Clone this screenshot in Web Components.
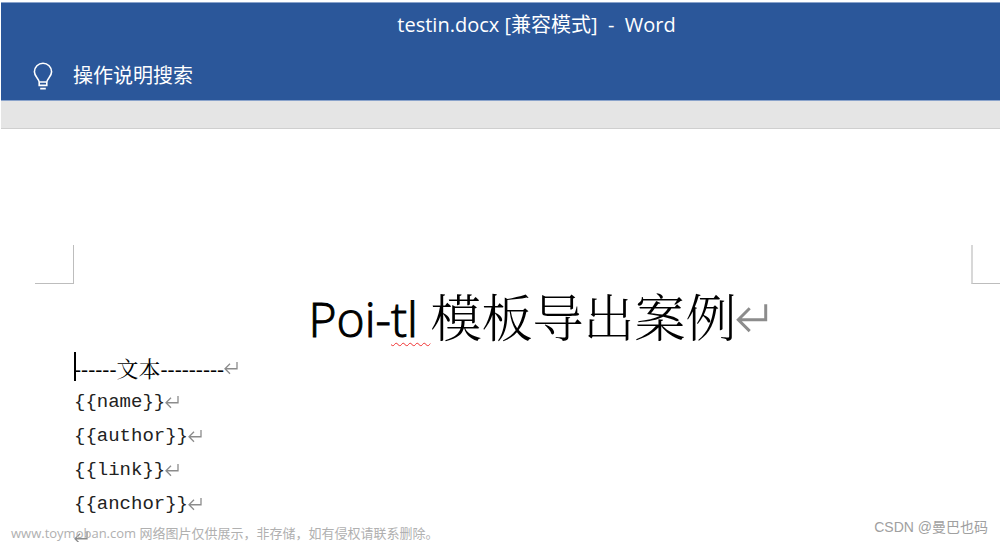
<!DOCTYPE html>
<html lang="zh-CN">
<head>
<meta charset="utf-8">
<title>testin.docx - Word</title>
<style>
body { margin: 0; background: #fff; font-family: "Open Sans", "Noto Sans CJK SC", sans-serif; }
</style>
</head>
<body>
<word-window>
  <word-titlebar slot="bar">testin.docx [兼容模式] &nbsp;- &nbsp;Word</word-titlebar>
  <word-tellme slot="bar">操作说明搜索</word-tellme>
  <word-page>
    <doc-title><latin-run>Poi-<spell-error>tl&nbsp;</spell-error></latin-run>模板导出案例</doc-title>
    <doc-line caret>------文本---------</doc-line>
    <doc-line mono>{{name}}</doc-line>
    <doc-line mono>{{author}}</doc-line>
    <doc-line mono>{{link}}</doc-line>
    <doc-line mono>{{anchor}}</doc-line>
    <doc-line mono></doc-line>
  </word-page>
  <water-mark slot="overlay">www.toymoban.com 网络图片仅供展示，非存储，如有侵权请联系删除。</water-mark>
  <water-mark slot="overlay" author>CSDN @曼巴也码</water-mark>
</word-window>
<script>
// Templates are trimmed and joined so that inline elements add no stray spaces.
const define = (name, html) => customElements.define(name, class extends HTMLElement {
  constructor() {
    super();
    this.attachShadow({ mode: "open" }).innerHTML = html.trim().replace(/>\s+</g, "><");
  }
});

define("return-mark", `
  <style>
    :host { display: block; flex: none; width: 14px; height: 14px; color: #8c8c8c; }
    svg { display: block; width: 100%; height: 100%; }
  </style>
  <svg viewBox="0 0 28 28" fill="none" stroke="currentColor" stroke-width="2.6" aria-hidden="true">
    <path d="M26 2V15.5H2M12 5.5L2 15.5L12 25.5"/>
  </svg>`);

define("word-window", `
  <style>
    :host { display: block; position: relative; height: 100vh; overflow: hidden; }
    header { margin: 2px 0 0 1px; background: #2b579a; border: 1px solid #8aa3cb; border-width: 1px 0; color: #fff; }
    .ruler { margin-left: 1px; height: 27px; background: #e5e5e5; border-bottom: 1px solid #cfcfcf; }
  </style>
  <header><slot name="bar"></slot></header>
  <div class="ruler"></div>
  <main><slot></slot></main>
  <slot name="overlay"></slot>`);

define("word-titlebar", `
  <style>
    :host { display: block; padding-left: 72px; text-align: center; font-size: 20px; line-height: 44px; white-space: nowrap; }
  </style>
  <slot></slot>`);

define("word-tellme", `
  <style>
    :host { display: block; padding: 7px 0 2px 32px; }
    button { display: flex; align-items: center; gap: 20px; height: 44px; padding: 0; border: 0; background: none;
      color: inherit; font: inherit; font-size: 20px; line-height: 28px; }
    svg { display: block; width: 20px; height: 28px; }
  </style>
  <button type="button">
    <svg viewBox="0 0 20 28" fill="none" stroke="#fff" stroke-width="1.6" aria-hidden="true">
      <path d="M6.2 23.4V20.5C6.2 16.3 1.4 14.8 1.4 9.8A8.6 8.6 0 0 1 18.6 9.8C18.6 14.8 13.8 16.3 13.8 20.5V23.4ZM6.2 20H13.8M7.2 26.6H12.8"/>
    </svg>
    <span><slot></slot></span>
  </button>`);

define("word-page", `
  <style>
    :host { display: block; padding-top: 116px; color: #000; font-family: "Open Sans", "Noto Serif CJK SC", "Noto Sans CJK SC", sans-serif; }
    .marks { display: flex; justify-content: space-between; padding-left: 35px; }
    .marks i { box-sizing: border-box; height: 39px; border-bottom: 1px solid #bdbdbd; }
    .left { width: 39px; border-right: 1px solid #bdbdbd; }
    .right { width: 29px; border-left: 2px solid #d8d8d8; }
    article { padding: 0 29px 0 74px; }
  </style>
  <div class="marks"><i class="left"></i><i class="right"></i></div>
  <article><slot></slot></article>`);

define("doc-title", `
  <style>
    :host { display: block; }
    h1 { display: flex; justify-content: center; align-items: center; height: 67px; margin: 0; font-size: 51px; font-weight: 300; line-height: 67px; white-space: nowrap; }
    return-mark { width: 32px; height: 32px; margin-right: -32px; }
  </style>
  <h1><span><slot></slot></span><return-mark></return-mark></h1>`);

define("latin-run", `
  <style>
    :host { display: inline; font-size: 48px; -webkit-text-stroke: 1px; }
  </style>
  <slot></slot>`);

define("spell-error", `
  <style>
    :host { display: inline; text-decoration: underline wavy #f03030 1px; text-underline-offset: 5px; text-decoration-skip-ink: none; }
  </style>
  <slot></slot>`);

define("doc-line", `
  <style>
    :host { display: block; position: relative; }
    p { display: flex; align-items: center; margin: 0; height: 34px; line-height: 34px; font-size: 22px; white-space: nowrap; }
    :host([mono]) p { font: 19px/34px "Liberation Mono", monospace; color: #222; }
    :host([caret])::before { content: ""; position: absolute; left: 0; top: 1px; width: 2px; height: 29px; background: #000; }
  </style>
  <p><slot></slot><return-mark></return-mark></p>`);

define("water-mark", `
  <style>
    :host { position: absolute; left: 11px; bottom: 0; font-size: 13px; line-height: 18px; color: #b0b0b0; white-space: nowrap; }
    :host([author]) { left: auto; right: 12px; bottom: 5px; font: 14px/20px "Liberation Sans", "Noto Sans CJK SC", sans-serif; color: #a0a0a0; }
  </style>
  <slot></slot>`);
</script>
</body>
</html>
